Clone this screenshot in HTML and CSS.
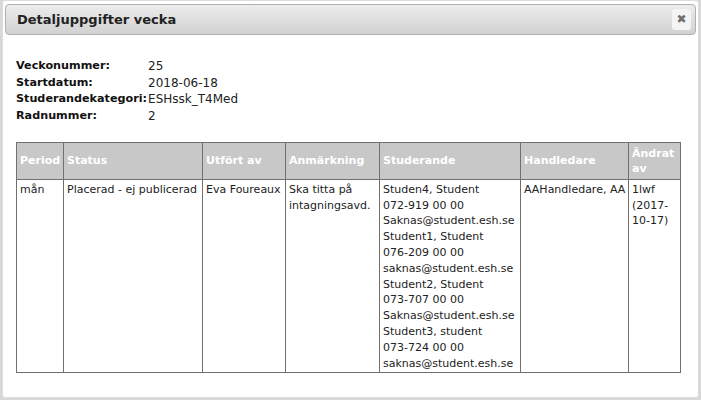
FILE: index.html
```html
<!DOCTYPE html>
<html lang="sv">
<head>
    <meta charset="UTF-8">
    <title>Detaljuppgifter vecka</title>
    <link rel="stylesheet" href="styles.css">
</head>
<body>

<div class="dialog">
    <div class="titlebar">
        <span class="title">Detaljuppgifter vecka</span>
        <span class="close">&#x2716;</span>
    </div>
    <div class="content">
        <table class="info">
            <tr><th>Veckonummer:</th><td>25</td></tr>
            <tr><th>Startdatum:</th><td>2018-06-18</td></tr>
            <tr><th>Studerandekategori:</th><td>ESHssk_T4Med</td></tr>
            <tr><th>Radnummer:</th><td>2</td></tr>
        </table>

        <table class="details">
            <colgroup>
                <col class="c-period">
                <col class="c-status">
                <col class="c-utfort">
                <col class="c-anm">
                <col class="c-stud">
                <col class="c-handl">
                <col class="c-andrat">
            </colgroup>
            <tr>
                <th>Period</th>
                <th>Status</th>
                <th>Utfört av</th>
                <th>Anmärkning</th>
                <th>Studerande</th>
                <th>Handledare</th>
                <th>Ändrat av</th>
            </tr>
            <tr>
                <td>mån</td>
                <td>Placerad - ej publicerad</td>
                <td>Eva Foureaux</td>
                <td>Ska titta på intagningsavd.</td>
                <td>
                    Studen4, Student<br>072-919 00 00<br>Saknas@student.esh.se<br>
                    Student1, Student<br>076-209 00 00<br>saknas@student.esh.se<br>
                    Student2, Student<br>073-707 00 00<br>Saknas@student.esh.se<br>
                    Student3, student<br>073-724 00 00<br>saknas@student.esh.se
                </td>
                <td class="nowrap">AAHandledare, AA</td>
                <td>1lwf (2017-10-17)</td>
            </tr>
        </table>
    </div>
</div>

</body>
</html>
```

FILE: styles.css
```css
    body {
        margin: 0;
        font-family: 'DejaVu Sans', Verdana, sans-serif;
        font-size: 11px;
        color: #222;
        background: #d8d8d8;
    }
    .dialog {
        margin: 0 0 0 2px;
        width: 697px;
        height: 398px;
        background: white;
        border: solid 1px #dddddd;
        border-radius: 3px;
        padding: 3px 2px;
        box-sizing: border-box;
    }
    .titlebar {
        display: flex;
        align-items: center;
        justify-content: space-between;
        height: 29px;
        padding: 0 4px 0 11px;
        background: linear-gradient(#ececec, #d2d2d2);
        border: solid 1px #b0b0b0;
        border-radius: 4px;
    }
    .title {
        font-size: 13px;
        font-weight: bold;
        color: #222;
    }
    .close {
        width: 19px;
        height: 21px;
        line-height: 21px;
        text-align: center;
        font-size: 12px;
        color: #707070;
        background: #f4f4f4;
        border-radius: 3px;
    }
    .content {
        padding: 23px 11px 0 11px;
    }
    .info {
        border-collapse: collapse;
        font-size: 11.2px;
        line-height: 16.7px;
    }
    .info th {
        text-align: left;
        padding: 0 1px 0 0;
        color: #111;
    }
    .info td {
        padding: 0;
        font-size: 12px;
    }
    .details {
        margin-top: 17px;
        table-layout: fixed;
        width: 665px;
        border-collapse: collapse;
        border: solid 1px #222;
        line-height: 15.8px;
    }
    .details th,
    .details td {
        border: solid 1px #707070;
        padding: 2px 3px 1px 3px;
        text-align: left;
        vertical-align: top;
    }
    .details th {
        background: #c8c8c8;
        color: white;
        height: 33px;
        vertical-align: middle;
    }
    .nowrap {
        white-space: nowrap;
    }
    .c-period { width: 47px; }
    .c-status { width: 139px; }
    .c-utfort { width: 83px; }
    .c-anm { width: 94px; }
    .c-stud { width: 141px; }
    .c-handl { width: 108px; }
    .c-andrat { width: 52px; }
```
